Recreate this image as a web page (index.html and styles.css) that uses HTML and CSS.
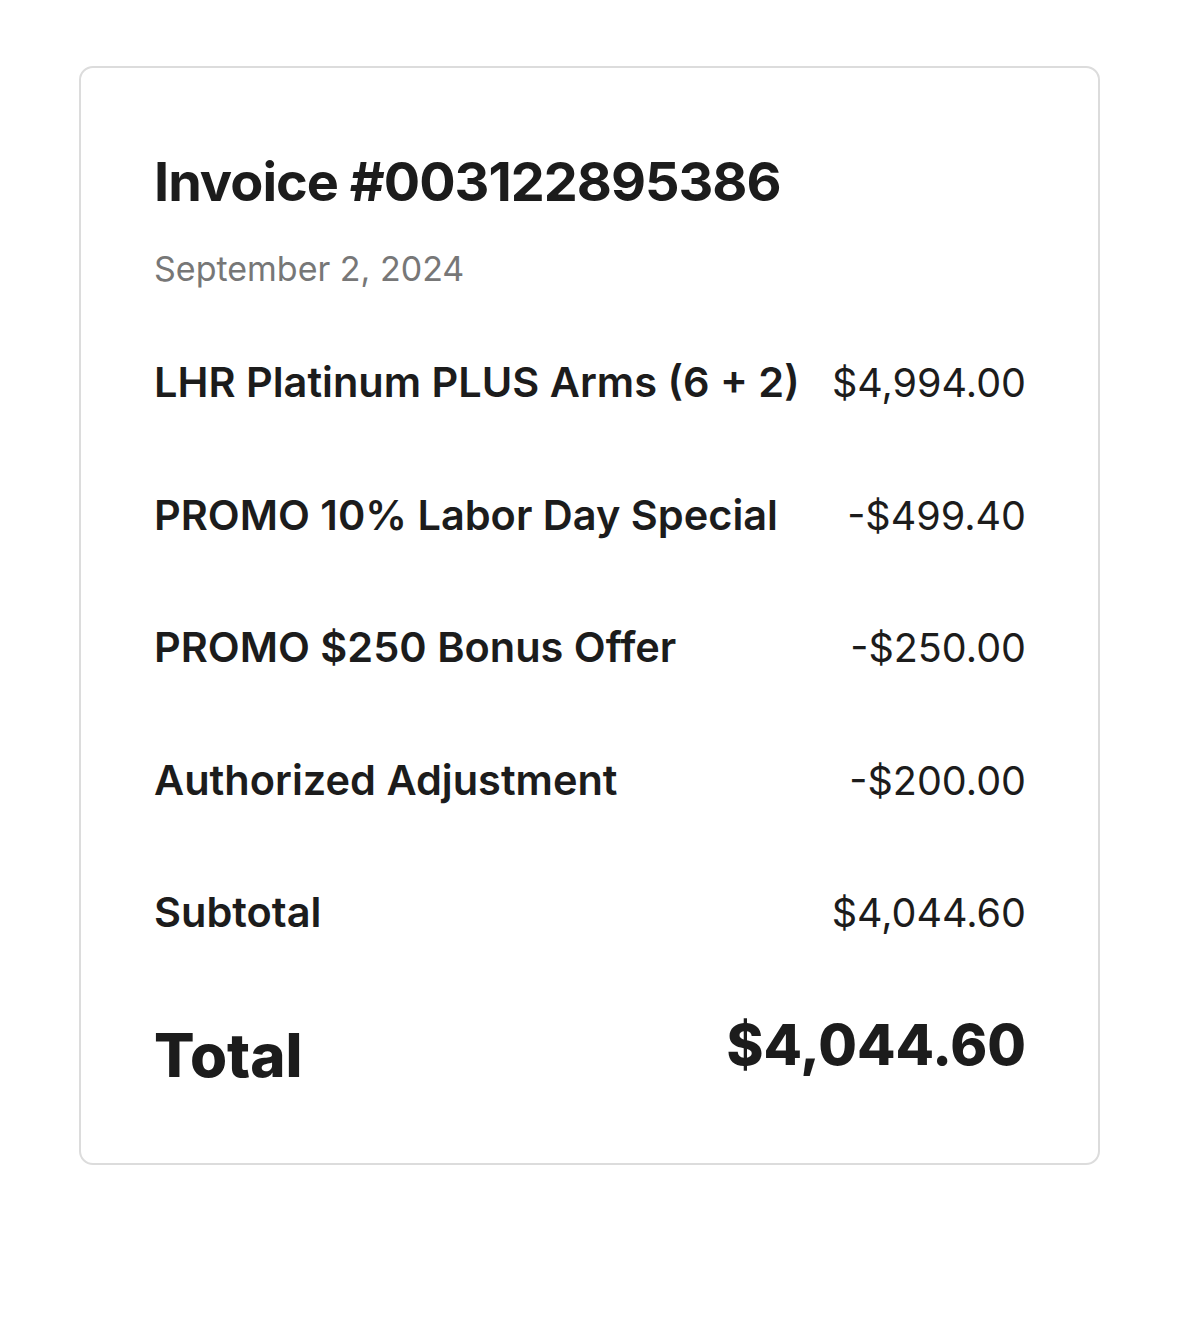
FILE: index.html
```html
<!DOCTYPE html>
<html lang="en">
<head>
<meta charset="utf-8">
<title>Invoice</title>
<link rel="stylesheet" href="styles.css">
</head>
<body>
<div class="page">
  <section class="card">
    <h1 class="title">Invoice #003122895386</h1>
    <p class="date">September 2, 2024</p>
    <div class="rows">
      <div class="row"><span class="label">LHR Platinum PLUS Arms (6 + 2)</span><span class="amount">$4,994.00</span></div>
      <div class="row"><span class="label">PROMO 10% Labor Day Special</span><span class="amount">-$499.40</span></div>
      <div class="row"><span class="label">PROMO $250 Bonus Offer</span><span class="amount">-$250.00</span></div>
      <div class="row"><span class="label">Authorized Adjustment</span><span class="amount">-$200.00</span></div>
      <div class="row"><span class="label">Subtotal</span><span class="amount">$4,044.60</span></div>
    </div>
    <div class="total-row"><span class="total-label">Total</span><span class="total-amount">$4,044.60</span></div>
  </section>
</div>
</body>
</html>
```
FILE: styles.css
```css
* { box-sizing: border-box; }
html, body { margin: 0; padding: 0; background: #ffffff; }
body { font-family: Inter, "Liberation Sans", sans-serif; color: #1c1c1c; }
.page { padding: 66px 79px 0 79px; }
.card {
  width: 1021px;
  height: 1099px;
  border: 2px solid #dcdcdc;
  border-radius: 14px;
  padding: 84px 72px 0 73px;
}
.title {
  margin: 0;
  font-size: 54px;
  line-height: 60px;
  font-weight: 700;
  letter-spacing: -1px;
}
.date {
  margin: 37px 0 0 0;
  font-size: 34px;
  line-height: 40px;
  color: #777777;
}
.rows { display: flex; flex-direction: column; gap: 85.5px; margin-top: 70px; }
.row { display: flex; justify-content: space-between; align-items: baseline; line-height: 46px; }
.label { font-size: 41.5px; font-weight: 600; }
.amount { font-size: 39.5px; font-weight: 400; }
.total-row { display: flex; justify-content: space-between; align-items: flex-start; margin-top: 77px; }
.total-label { font-size: 60px; line-height: 64px; font-weight: 800; margin-top: 10px; }
.total-amount { font-size: 56px; line-height: 64px; font-weight: 800; }
```
